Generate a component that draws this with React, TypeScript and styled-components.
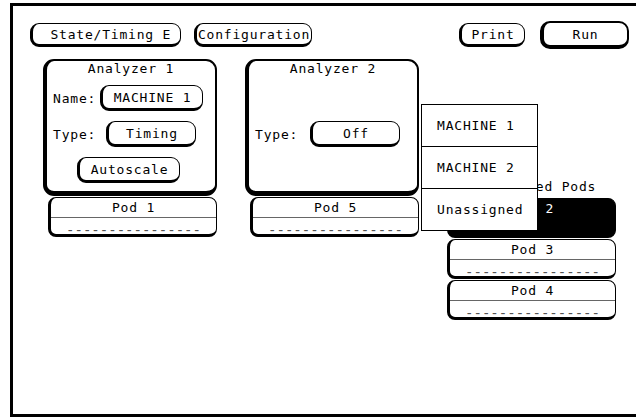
import React from "react";
import styled, { createGlobalStyle, css } from "styled-components";

const GlobalStyle = createGlobalStyle`
  html, body {
    margin: 0;
    padding: 0;
    background: #fff;
    overflow: hidden;
  }
  body {
    font-family: "DejaVu Sans Mono", "Liberation Mono", monospace;
    font-size: 13px;
    letter-spacing: 0.8px;
    color: #000;
  }
`;

const Screen = styled.div`
  box-sizing: border-box;
  margin: 3px 0 0 10px;
  height: 414px;
  border: 3px solid #000;
  border-right: none;
  display: flex;
  flex-direction: column;
`;

const Toolbar = styled.div`
  display: flex;
  align-items: center;
  height: 28px;
  margin-top: 15px;
  padding: 0 7px 0 17px;
`;

const SoftKey = styled.div<{ $w: number; $h?: number; $heavy?: boolean; $push?: boolean; $gap?: number }>`
  box-sizing: border-box;
  width: ${(p) => p.$w}px;
  height: ${(p) => p.$h ?? 24}px;
  margin-left: ${(p) => (p.$push ? "auto" : `${p.$gap ?? 0}px`)};
  border: 1px solid #000;
  border-left-width: 3px;
  border-bottom-width: 3px;
  border-radius: 9px;
  display: flex;
  align-items: center;
  justify-content: center;
  white-space: nowrap;
  ${(p) =>
    p.$heavy &&
    css`
      border-width: 2px 2px 4px 4px;
      border-radius: 10px;
    `}
`;

const Workspace = styled.div`
  position: relative;
  display: flex;
  align-items: flex-start;
  gap: 28px;
  margin-top: 10px;
  padding-left: 30px;
`;

const AnalyzerColumn = styled.div`
  display: flex;
  flex-direction: column;
  align-items: flex-end;
  width: 174px;
  gap: 1px;
`;

const AnalyzerBox = styled.div`
  box-sizing: border-box;
  width: 174px;
  height: 137px;
  border: 2px solid #000;
  border-left-width: 4px;
  border-bottom-width: 5px;
  border-radius: 11px;
  display: flex;
  flex-direction: column;
`;

const BoxTitle = styled.div`
  height: 16px;
  line-height: 16px;
  text-align: center;
`;

const Rows = styled.div`
  display: flex;
  flex-direction: column;
  gap: 10px;
  margin-top: 8px;
`;

const Row = styled.div<{ $indent?: number }>`
  display: flex;
  align-items: center;
  height: 26px;
  padding-left: ${(p) => p.$indent ?? 6}px;
`;

const FieldLabel = styled.span`
  width: 44px;
  white-space: nowrap;
`;

const Pod = styled.div<{ $active?: boolean }>`
  box-sizing: border-box;
  width: 169px;
  height: 40px;
  border: 1px solid #000;
  border-left-width: 3px;
  border-bottom-width: 3px;
  border-radius: 8px;
  background: ${(p) => (p.$active ? "#000" : "#fff")};
  color: ${(p) => (p.$active ? "#fff" : "#000")};
  display: flex;
  flex-direction: column;
`;

const PodName = styled.div<{ $active?: boolean }>`
  height: 19px;
  line-height: 19px;
  text-align: center;
  border-bottom: 1px solid ${(p) => (p.$active ? "#000" : "#666")};
`;

const PodBits = styled.div<{ $active?: boolean }>`
  height: 10px;
  padding-top: 6px;
  font-size: 14px;
  line-height: 13px;
  letter-spacing: 0;
  text-align: center;
  white-space: nowrap;
  color: ${(p) => (p.$active ? "#000" : "#555")};
`;

const PodColumn = styled.div`
  display: flex;
  flex-direction: column;
  width: 169px;
  gap: 1px;
  margin-top: 120px;
`;

const ColumnLabel = styled.div`
  height: 16px;
  line-height: 16px;
  text-align: center;
  white-space: nowrap;
  margin-bottom: 2px;
`;

const Menu = styled.div`
  position: absolute;
  left: 408px;
  top: 45px;
  width: 117px;
  box-sizing: border-box;
  border: 1px solid #000;
  background: #fff;
  z-index: 5;
`;

const MenuItem = styled.div`
  height: 41px;
  line-height: 41px;
  padding-left: 15px;
  white-space: nowrap;
  & + & {
    border-top: 1px solid #000;
  }
`;

const DASHES = "----------------";

const PodCard = ({ name, active }: { name: string; active?: boolean }) => (
  <Pod $active={active}>
    <PodName $active={active}>{name}</PodName>
    <PodBits $active={active}>{DASHES}</PodBits>
  </Pod>
);

export default function App() {
  return (
    <>
      <GlobalStyle />
      <Screen>
        <Toolbar>
          <SoftKey $w={151}>&nbsp;State/Timing E</SoftKey>
          <SoftKey $w={118} $gap={13}>Configuration</SoftKey>
          <SoftKey $w={66} $push>Print</SoftKey>
          <SoftKey $w={89} $h={28} $gap={15} $heavy>Run</SoftKey>
        </Toolbar>

        <Workspace>
          <AnalyzerColumn>
            <AnalyzerBox>
              <BoxTitle>Analyzer 1</BoxTitle>
              <Rows>
                <Row>
                  <FieldLabel>Name:</FieldLabel>
                  <SoftKey $w={103} $h={26} $gap={3}>MACHINE 1</SoftKey>
                </Row>
                <Row>
                  <FieldLabel>Type:</FieldLabel>
                  <SoftKey $w={90} $h={26} $gap={9}>Timing</SoftKey>
                </Row>
                <Row $indent={30}>
                  <SoftKey $w={103} $h={26}>Autoscale</SoftKey>
                </Row>
              </Rows>
            </AnalyzerBox>
            <PodCard name="Pod 1" />
          </AnalyzerColumn>

          <AnalyzerColumn>
            <AnalyzerBox>
              <BoxTitle>Analyzer 2</BoxTitle>
              <Rows>
                <Row />
                <Row>
                  <FieldLabel>Type:</FieldLabel>
                  <SoftKey $w={90} $h={26} $gap={11}>Off</SoftKey>
                </Row>
              </Rows>
            </AnalyzerBox>
            <PodCard name="Pod 5" />
          </AnalyzerColumn>

          <PodColumn>
            <ColumnLabel>Unassigned Pods</ColumnLabel>
            <PodCard name="Pod 2" active />
            <PodCard name="Pod 3" />
            <PodCard name="Pod 4" />
          </PodColumn>

          <Menu>
            <MenuItem>MACHINE 1</MenuItem>
            <MenuItem>MACHINE 2</MenuItem>
            <MenuItem>Unassigned</MenuItem>
          </Menu>
        </Workspace>
      </Screen>
    </>
  );
}
